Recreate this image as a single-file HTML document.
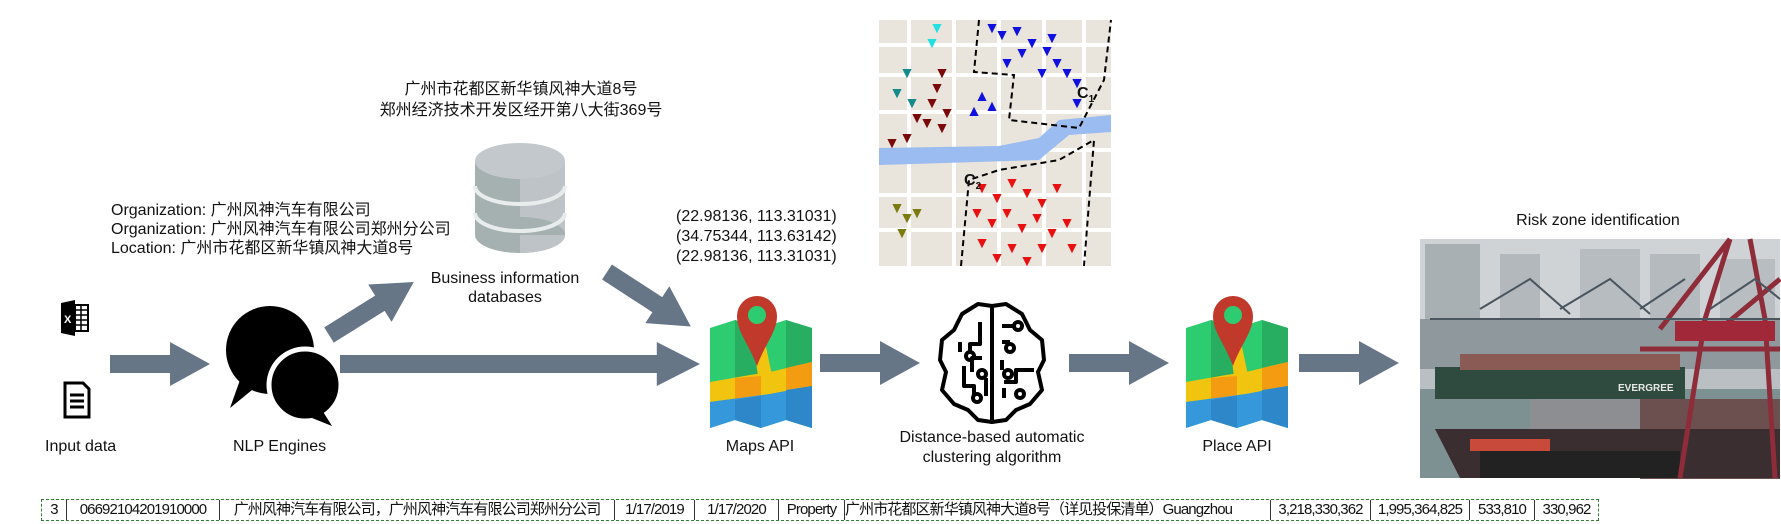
<!DOCTYPE html>
<html><head><meta charset="utf-8"><style>
html,body{margin:0;padding:0;background:#fff;width:1781px;height:524px;overflow:hidden}
svg{display:block}
text{font-family:"Liberation Sans","Noto Sans CJK SC",sans-serif;fill:#111}
.t{font-size:16px}
.c{font-size:16px}
.tb{position:absolute;left:41px;top:499px;height:20px;border:1px dashed #2e7d32;display:flex;font-family:"Liberation Sans","Noto Sans CJK SC",sans-serif;font-size:15px;letter-spacing:-0.9px;color:#111;white-space:nowrap}
.tb div{border-right:1px solid #333;height:20px;line-height:20px;overflow:hidden;text-align:center;box-sizing:border-box}
.tb div:last-child{border-right:none}
</style></head><body>
<svg width="1781" height="524" viewBox="0 0 1781 524" xmlns="http://www.w3.org/2000/svg">
<defs>
<g id="arr"><polygon points="0,-9 60,-9 60,-22 100,0 60,22 60,9 0,9" fill="#667687"/></g>
<g id="mapi">
 <polygon points="0,8 25,0 51,8 76,0 102,8 102,108 76,100 51,108 25,100 0,108" fill="#2ecc71"/>
 <polygon points="25,0 51,8 51,108 25,100" fill="#27ae60"/>
 <polygon points="76,0 102,8 102,108 76,100" fill="#27ae60"/>
 <polygon points="0,62 40,55 60,52 102,42 102,66 60,74 0,82" fill="#f1c40f"/>
 <polygon points="40,0 52,8 62,55 48,56" fill="#f1c40f"/>
 <polygon points="25,58 51,56 51,76 25,80" fill="#f39c12"/>
 <polygon points="76,48 102,42 102,66 76,70" fill="#f39c12"/>
 <polygon points="0,82 60,74 102,66 102,108 76,100 51,108 25,100 0,108" fill="#3498db"/>
 <polygon points="25,80 51,76 51,108 25,100" fill="#2d87c8"/>
 <polygon points="76,70 102,66 102,108 76,100" fill="#2d87c8"/>
 <path d="M27,-4 a20,20 0 0 1 40,0 c0,16 -12,28 -20,50 c-8,-22 -20,-34 -20,-50z" fill="#c0392b"/>
 <circle cx="47" cy="-5" r="9" fill="#2ecc71"/>
</g>
</defs>

<g transform="translate(61,300)">
 <polygon points="0,3 14,0 14,36 0,33" fill="#000"/>
 <rect x="14" y="5" width="13" height="26" fill="#fff" stroke="#000" stroke-width="2"/>
 <path d="M14,10h13M14,15h13M14,20h13M14,25h13M20,5v26" stroke="#000" stroke-width="1.5"/>
 <text x="3" y="23" style="font-size:11px;font-weight:bold;fill:#fff">X</text>
</g>
<g transform="translate(63,381)">
 <path d="M2,2 h18 l6,6 v28 h-24z" fill="#fff" stroke="#000" stroke-width="3"/>
 <path d="M7,14h14M7,20h14M7,26h14" stroke="#000" stroke-width="3"/>
</g>
<text class="t" x="45" y="451">Input data</text>

<use href="#arr" x="110" y="364"/>

<g>
 <circle cx="270" cy="350" r="44" fill="#000"/>
 <path d="M240,380 l-10,28 l22,-18z" fill="#000"/>
 <circle cx="305" cy="385" r="36" fill="#000" stroke="#fff" stroke-width="5"/>
 <path d="M322,410 l10,16 l-20,-8z" fill="#000"/>
</g>
<text class="t" x="233" y="451">NLP Engines</text>

<g transform="translate(340,364) scale(3.6,1)"><polygon points="0,-9 88,-9 88,-22 100,0 88,22 88,9 0,9" fill="#667687"/></g>
<g transform="translate(329,335) rotate(-32)"><use href="#arr"/></g>

<g transform="translate(475,143)">
 <rect x="0" y="18" width="90" height="74" fill="#a5b1b0"/>
 <rect x="45" y="18" width="45" height="74" fill="#bdc3c7"/>
 <ellipse cx="45" cy="92" rx="45" ry="18" fill="#a5b1b0"/>
 <path d="M45,92 v18 a45,18 0 0 0 45,-18z" fill="#bdc3c7"/>
 <path d="M0,43 a45,18 0 0 0 90,0" fill="none" stroke="#e8ecec" stroke-width="4"/>
 <path d="M0,70 a45,18 0 0 0 90,0" fill="none" stroke="#e8ecec" stroke-width="4"/>
 <ellipse cx="45" cy="18" rx="45" ry="18" fill="#c2c8cb"/>
</g>
<text class="t" x="505" y="283" text-anchor="middle">Business information</text>
<text class="t" x="505" y="302" text-anchor="middle">databases</text>

<text class="c" x="521" y="94" text-anchor="middle">广州市花都区新华镇风神大道8号</text>
<text class="c" x="521" y="115" text-anchor="middle">郑州经济技术开发区经开第八大街369号</text>

<text class="c" x="111" y="215">Organization: 广州风神汽车有限公司</text>
<text class="c" x="111" y="234">Organization: 广州风神汽车有限公司郑州分公司</text>
<text class="c" x="111" y="253">Location: 广州市花都区新华镇风神大道8号</text>

<g transform="translate(607,272) rotate(33)"><use href="#arr"/></g>

<text class="t" x="676" y="221">(22.98136, 113.31031)</text>
<text class="t" x="676" y="241">(34.75344, 113.63142)</text>
<text class="t" x="676" y="261">(22.98136, 113.31031)</text>

<g transform="translate(710,320)"><use href="#mapi"/></g>
<text class="t" x="760" y="451" text-anchor="middle">Maps API</text>

<use href="#arr" x="820" y="363"/>

<g transform="translate(940,302)" fill="none" stroke="#000" stroke-width="4" stroke-linejoin="round">
 <path d="M52,4 l-14,-2 l-16,10 l-8,16 l-12,10 l-2,20 l6,12 l-4,18 l12,14 l14,6 l10,10 l14,2"/>
 <path d="M52,4 l14,-2 l16,10 l8,16 l12,10 l2,20 l-6,12 l4,18 l-12,14 l-14,6 l-10,10 l-14,2z"/>
 <path d="M52,4 v110"/>
 <path d="M40,20 v22 h-10 v8 M20,40 v10 M42,56 h-10 v14 M24,64 v20 h10 v10 M46,76 v18 M62,24 h12 M62,40 h8 M62,58 v10 M64,80 h12 v-12 h18 M64,96 v-10"/>
 <circle cx="30" cy="54" r="4"/><circle cx="42" cy="72" r="4"/><circle cx="37" cy="96" r="4"/>
 <circle cx="78" cy="24" r="4"/><circle cx="70" cy="46" r="4"/><circle cx="68" cy="72" r="4"/><circle cx="80" cy="92" r="4"/>
</g>
<text class="t" x="992" y="442" text-anchor="middle">Distance-based automatic</text>
<text class="t" x="992" y="462" text-anchor="middle">clustering algorithm</text>

<use href="#arr" x="1069" y="363"/>

<g transform="translate(1186,320)"><use href="#mapi"/></g>
<text class="t" x="1237" y="451" text-anchor="middle">Place API</text>

<use href="#arr" x="1299" y="363"/>

<text class="t" x="1598" y="225" text-anchor="middle">Risk zone identification</text>

<g transform="translate(1420,239)">
 <rect width="360" height="239" fill="#b9bfc2"/>
 <rect x="0" y="0" width="360" height="120" fill="#cfd3d5"/>
 <rect x="5" y="5" width="55" height="120" fill="#a9b0b4"/>
 <rect x="80" y="15" width="40" height="90" fill="#b2b8bb"/>
 <rect x="160" y="10" width="60" height="100" fill="#b6bcbf"/>
 <rect x="230" y="15" width="50" height="90" fill="#b4babd"/>
 <rect x="300" y="20" width="55" height="80" fill="#b7bdc0"/>
 <rect x="0" y="80" width="360" height="50" fill="#8f989c"/>
 <rect x="0" y="150" width="360" height="89" fill="#7e9192"/>
 <rect x="15" y="128" width="250" height="32" fill="#2f4a3e"/>
 <rect x="40" y="115" width="220" height="16" fill="#8a5a55"/>
 <text x="198" y="152" style="font-size:10px;font-weight:bold;fill:#e8e8e8">EVERGREE</text>
 <rect x="110" y="160" width="130" height="60" fill="#8d8e92"/>
 <rect x="220" y="160" width="140" height="80" fill="#6c5050"/>
 <polygon points="15,190 360,190 360,239 40,239" fill="#3b2e30"/>
 <rect x="60" y="212" width="200" height="27" fill="#222"/>
 <rect x="50" y="200" width="80" height="12" fill="#c84a3a"/>
 <g stroke="#8e2c3a" stroke-width="5" fill="none">
  <path d="M260,239 L285,80 L310,0 M330,0 L345,80 L355,239 M220,110 L360,110 M240,90 L310,0 M300,90 L360,40"/>
 </g>
 <rect x="255" y="82" width="100" height="20" fill="#a02838"/>
 <g stroke="#4a5560" stroke-width="2" fill="none">
  <path d="M60,70 L110,40 L150,75 M140,70 L190,40 L230,75 M220,70 L265,40 M290,70 L335,40 L360,60"/>
  <path d="M10,80 H360"/>
 </g>
</g>

<g transform="translate(879,20)">
 <rect width="232" height="246" fill="#e9e4dc"/>
 <g stroke="#fff" stroke-width="4">
  <path d="M0,25H232M0,55H232M0,92H232M0,130H232M0,175H232M0,210H232M30,0V246M75,0V246M120,0V246M165,0V246M205,0V246"/>
 </g>
 <polygon points="0,128 120,126 160,118 180,100 232,95 232,112 190,115 160,140 0,145" fill="#9bbcf0"/>
 <path d="M100,0 L95,52 L135,55 L130,100 L200,108 L225,60 L232,0" fill="none" stroke="#000" stroke-width="2" stroke-dasharray="6,4"/>
 <path d="M82,246 L90,160 L120,150 L180,140 L215,120 L205,246" fill="none" stroke="#000" stroke-width="2" stroke-dasharray="6,4"/>
 <g fill="#1010e0" stroke="#1010e0" stroke-width="2"><path d="M110,5l6,0l-3,6z M120,12l6,0l-3,6z M135,8l6,0l-3,6z M150,20l6,0l-3,6z M165,28l6,0l-3,6z M175,40l6,0l-3,6z M185,50l6,0l-3,6z M195,60l6,0l-3,6z M170,15l6,0l-3,6z M140,30l6,0l-3,6z M125,40l6,0l-3,6z M160,50l6,0l-3,6z M195,80l6,0l-3,6z M100,80l6,0l-3,-6z M110,90l6,0l-3,-6z M92,95l6,0l-3,-6z"/></g>
 <g fill="#e81010" stroke="#e81010" stroke-width="2"><path d="M100,165l6,0l-3,6z M115,175l6,0l-3,6z M130,160l6,0l-3,6z M145,170l6,0l-3,6z M160,180l6,0l-3,6z M175,165l6,0l-3,6z M95,190l6,0l-3,6z M110,200l6,0l-3,6z M125,190l6,0l-3,6z M140,205l6,0l-3,6z M155,195l6,0l-3,6z M170,210l6,0l-3,6z M185,200l6,0l-3,6z M100,220l6,0l-3,6z M130,225l6,0l-3,6z M160,225l6,0l-3,6z M190,225l6,0l-3,6z M115,235l6,0l-3,6z M145,238l6,0l-3,6z"/></g>
 <g fill="#7a0a0a" stroke="#7a0a0a" stroke-width="2"><path d="M60,50l6,0l-3,6z M55,65l6,0l-3,6z M50,80l6,0l-3,6z M65,90l6,0l-3,6z M45,100l6,0l-3,6z M35,95l6,0l-3,6z M25,115l6,0l-3,6z M10,120l6,0l-3,6z M60,105l6,0l-3,6z"/></g>
 <g fill="#148a8a" stroke="#148a8a" stroke-width="2"><path d="M25,50l6,0l-3,6z M15,70l6,0l-3,6z M30,80l6,0l-3,6z"/></g>
 <g fill="#22e0e0" stroke="#22e0e0" stroke-width="2"><path d="M55,5l6,0l-3,6z M50,20l6,0l-3,6z"/></g>
 <g fill="#7a7a10" stroke="#7a7a10" stroke-width="2"><path d="M15,185l6,0l-3,6z M25,195l6,0l-3,6z M35,190l6,0l-3,6z M20,210l6,0l-3,6z"/></g>
 <text x="85" y="165" style="font-size:16px;font-weight:bold">C<tspan dy="4" style="font-size:10px">2</tspan></text>
 <text x="198" y="78" style="font-size:16px;font-weight:bold">C<tspan dy="4" style="font-size:10px">1</tspan></text>
</g>
</svg>

<div class="tb">
 <div style="width:25px">3</div>
 <div style="width:153px">06692104201910000</div>
 <div style="width:395px">广州风神汽车有限公司，广州风神汽车有限公司郑州分公司</div>
 <div style="width:80px">1/17/2019</div>
 <div style="width:84px">1/17/2020</div>
 <div style="width:66px">Property</div>
 <div style="width:426px;text-align:left">广州市花都区新华镇风神大道8号（详见投保清单）Guangzhou</div>
 <div style="width:100px">3,218,330,362</div>
 <div style="width:99px">1,995,364,825</div>
 <div style="width:65px">533,810</div>
 <div style="width:63px">330,962</div>
</div>
</body></html>
